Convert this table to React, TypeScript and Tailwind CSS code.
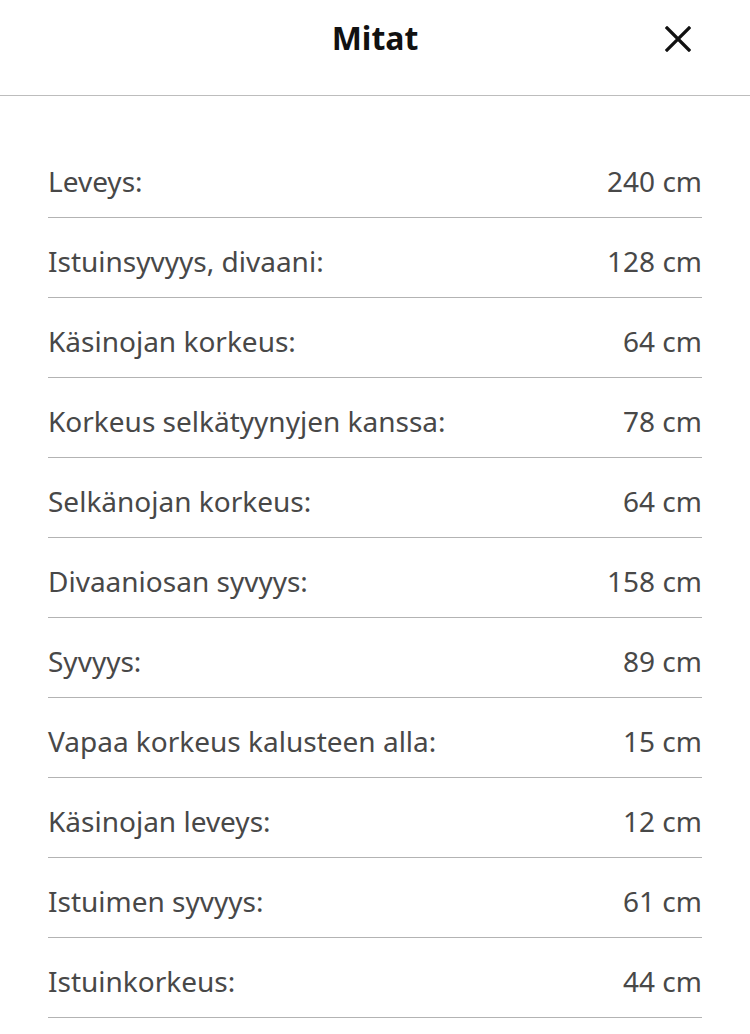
const ROWS: { label: string; value: string }[] = [
  { label: "Leveys:", value: "240 cm" },
  { label: "Istuinsyvyys, divaani:", value: "128 cm" },
  { label: "Käsinojan korkeus:", value: "64 cm" },
  { label: "Korkeus selkätyynyjen kanssa:", value: "78 cm" },
  { label: "Selkänojan korkeus:", value: "64 cm" },
  { label: "Divaaniosan syvyys:", value: "158 cm" },
  { label: "Syvyys:", value: "89 cm" },
  { label: "Vapaa korkeus kalusteen alla:", value: "15 cm" },
  { label: "Käsinojan leveys:", value: "12 cm" },
  { label: "Istuimen syvyys:", value: "61 cm" },
  { label: "Istuinkorkeus:", value: "44 cm" },
]

export default function App() {
  return (
    <div className="w-[750px] h-[1034px] overflow-hidden bg-white font-['Noto_Sans',sans-serif]">
      <header className="relative h-[96px] border-b border-[#bdbdbd] flex items-center justify-center">
        <h1 className="text-[32px] font-bold text-[#111111] -mt-[20px]">Mitat</h1>
        <button className="absolute right-[58px] top-[25px] w-[28px] h-[28px] flex items-center justify-center" aria-label="Sulje">
          <svg width="26" height="26" viewBox="0 0 26 26" fill="none" stroke="#111111" strokeWidth="3.2" strokeLinecap="square">
            <path d="M2 2 L24 24 M24 2 L2 24" />
          </svg>
        </button>
      </header>
      <ul className="px-[48px] pt-[42px]">
        {ROWS.map((r) => (
          <li
            key={r.label}
            className="h-[80px] pt-[6px] flex items-center justify-between border-b border-[#b3b3b3] text-[28px] text-[#484848]"
          >
            <span>{r.label}</span>
            <span>{r.value}</span>
          </li>
        ))}
      </ul>
    </div>
  )
}
